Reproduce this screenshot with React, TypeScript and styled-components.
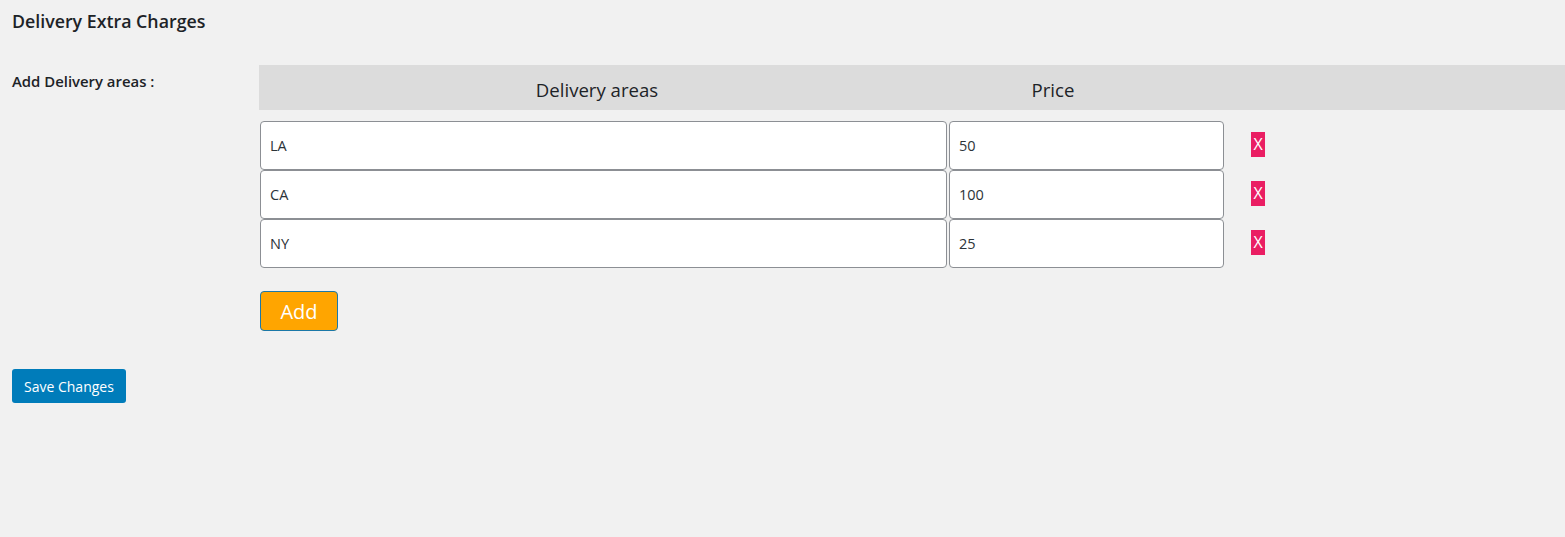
import styled, { createGlobalStyle } from "styled-components";

const GlobalStyle = createGlobalStyle`
  html, body {
    margin: 0;
    padding: 0;
    background: #f1f1f1;
  }
  body {
    font-family: "Open Sans", "Noto Sans", sans-serif;
    color: #1d2327;
  }
`;

const Page = styled.div`
  min-height: 537px;
  padding: 10px 0 0 12px;
  box-sizing: border-box;
`;

const Title = styled.h2`
  margin: 0;
  font-size: 17.8px;
  font-weight: 600;
  line-height: 23px;
  color: #1d2327;
`;

const FormRow = styled.div`
  display: flex;
  margin-top: 32px;
`;

const Label = styled.div`
  width: 247px;
  flex-shrink: 0;
  padding-top: 6px;
  font-size: 14.9px;
  font-weight: 600;
  line-height: 20px;
  color: #1d2327;
`;

const Field = styled.div`
  flex: 1;
  min-width: 0;
`;

const HeadRow = styled.div`
  display: grid;
  grid-template-columns: 676px 236px 1fr;
  height: 45px;
  align-items: center;
  background: #dcdcdc;
`;

const HeadCell = styled.div`
  text-align: center;
  font-size: 18.6px;
  color: #1d2327;
  padding-top: 4px;
`;

const Rows = styled.div`
  display: flex;
  flex-direction: column;
  margin-top: 11px;
  padding-left: 1px;
`;

const AreaRow = styled.div`
  display: flex;
  align-items: center;
  height: 49px;
`;

const TextInput = styled.input<{ $w: number }>`
  width: ${(p) => p.$w}px;
  height: 49px;
  box-sizing: border-box;
  margin: 0;
  padding: 0 9px;
  border: 1px solid #8c8f94;
  border-radius: 4px;
  background: #fff;
  font-family: inherit;
  font-size: 14.5px;
  color: #2c3338;
  outline: none;
  & + & {
    margin-left: 2px;
  }
`;

const RemoveButton = styled.button`
  margin-left: 27px;
  width: 14px;
  height: 25px;
  padding: 0;
  border: 0;
  background: #ea1e63;
  color: #fff;
  font-family: inherit;
  font-size: 16px;
  line-height: 25px;
  text-align: center;
  cursor: pointer;
  margin-top: -2px;
`;

const AddButton = styled.button`
  margin: 23px 0 0 1px;
  width: 78px;
  height: 40px;
  border: 1px solid #1b78a8;
  border-radius: 4px;
  background: #ffa500;
  color: #fff;
  font-family: inherit;
  font-size: 20px;
  cursor: pointer;
`;

const SaveButton = styled.button`
  margin-top: 38px;
  height: 34px;
  padding: 0 12px;
  border: 0;
  border-radius: 3px;
  background: #007cba;
  color: #fff;
  font-family: inherit;
  font-size: 14px;
  cursor: pointer;
`;

const areas = [
  { name: "LA", price: "50" },
  { name: "CA", price: "100" },
  { name: "NY", price: "25" },
];

export default function App() {
  return (
    <Page>
      <GlobalStyle />
      <Title>Delivery Extra Charges</Title>
      <FormRow>
        <Label>Add Delivery areas :</Label>
        <Field>
          <HeadRow>
            <HeadCell>Delivery areas</HeadCell>
            <HeadCell>Price</HeadCell>
            <HeadCell />
          </HeadRow>
          <Rows>
            {areas.map((a) => (
              <AreaRow key={a.name}>
                <TextInput $w={687} defaultValue={a.name} />
                <TextInput $w={275} defaultValue={a.price} />
                <RemoveButton>X</RemoveButton>
              </AreaRow>
            ))}
          </Rows>
          <AddButton>Add</AddButton>
        </Field>
      </FormRow>
      <SaveButton>Save Changes</SaveButton>
    </Page>
  );
}
